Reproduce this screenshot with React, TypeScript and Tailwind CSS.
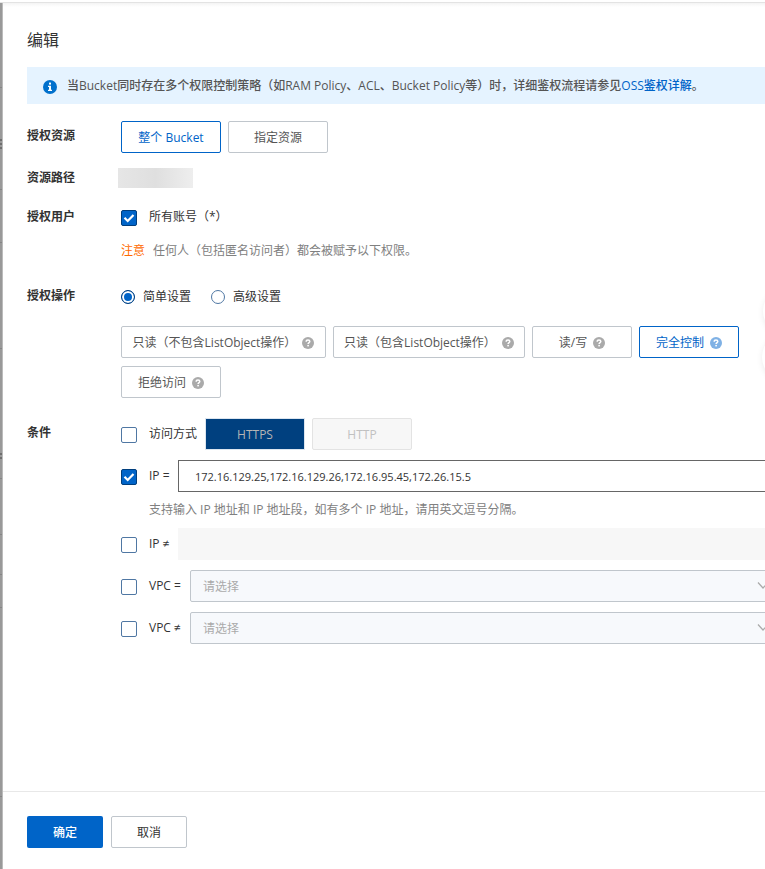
import { useState } from 'react';
import type { ReactNode } from 'react';

type Permission = 'read' | 'list' | 'write' | 'full' | 'deny';

const PERMISSIONS: Array<{ id: Permission; label: string; width: string }> = [
  { id: 'read', label: '只读（不包含ListObject操作）', width: 'w-[205px]' },
  { id: 'list', label: '只读（包含ListObject操作）', width: 'w-48' },
  { id: 'write', label: '读/写', width: 'w-[100px]' },
  { id: 'full', label: '完全控制', width: 'w-[100px]' },
  { id: 'deny', label: '拒绝访问', width: 'w-[100px]' },
];

const BUTTON_BASE = 'flex h-8 items-center justify-center rounded-xs border bg-white pt-0.5 whitespace-nowrap';
const BUTTON_ACTIVE = 'border-[#0064c8] text-[#0064c8]';
const BUTTON_IDLE = 'border-[#c0c6cc] text-[#555]';

function HelpIcon({ active }: { active: boolean }) {
  return (
    <svg viewBox="0 0 12 12" className={`h-3 w-3 shrink-0 ${active ? 'text-[#7fb1e5]' : 'text-[#aaa]'}`} aria-hidden="true">
      <circle cx="6" cy="6" r="6" fill="currentColor" />
      <path d="M4.2 4.7C4.2 3.6 5 3 6 3s1.8.6 1.8 1.5C7.8 5.6 6.1 5.7 6.1 7.1" fill="none" stroke="#fff" strokeWidth="1.5" />
      <rect x="5.3" y="7.9" width="1.6" height="1.5" fill="#fff" />
    </svg>
  );
}

function InfoIcon() {
  return (
    <svg viewBox="0 0 14 14" className="mt-0.5 h-3.5 w-3.5 shrink-0" aria-hidden="true">
      <circle cx="7" cy="7" r="7" fill="#0070cc" />
      <rect x="6" y="2.6" width="2" height="2" fill="#fff" />
      <path d="M5 5.7h3v4h1v1.300H5V9.700h1V7H5z" fill="#fff" />
    </svg>
  );
}

function Checkbox({ id, defaultChecked = false }: { id: string; defaultChecked?: boolean }) {
  return (
    <span className="relative mt-0.5 mr-3 flex h-4 w-4 shrink-0">
      <input
        id={id}
        type="checkbox"
        defaultChecked={defaultChecked}
        className="peer h-4 w-4 appearance-none rounded-xs border border-[#4f77a3] bg-white checked:border-[#003e7d] checked:bg-[#0064c8]"
      />
      <svg viewBox="0 0 16 16" className="pointer-events-none absolute inset-0 hidden peer-checked:block" aria-hidden="true">
        <path d="M3.5 7.8 6.7 11l5.800-6" fill="none" stroke="#fff" strokeWidth="2.2" />
      </svg>
    </span>
  );
}

function Radio({ id, label, defaultChecked = false }: { id: string; label: string; defaultChecked?: boolean }) {
  return (
    <span className="flex items-center gap-2">
      <input
        id={id}
        type="radio"
        name="mode"
        defaultChecked={defaultChecked}
        className="h-3.5 w-3.5 appearance-none rounded-full border border-[#4f77a3] bg-white checked:border-[#003e7d] checked:bg-[#0064c8] checked:shadow-[inset_0_0_0_2px_#fff]"
      />
      <label htmlFor={id}>{label}</label>
    </span>
  );
}

function FormRow({ label, tall = false, children }: { label: string; tall?: boolean; children: ReactNode }) {
  return (
    <div className="flex">
      <h3 className={`w-[94px] shrink-0 font-semibold ${tall ? 'leading-[30px]' : 'leading-5'}`}>{label}</h3>
      <div className="min-w-0 flex-1">{children}</div>
    </div>
  );
}

function VpcSelect({ id, label }: { id: string; label: string }) {
  return (
    <div className="-mr-4 flex h-8 items-center">
      <Checkbox id={`${id}-on`} />
      <label htmlFor={`${id}-on`} className="mr-2 w-[33px] shrink-0 whitespace-nowrap">
        {label}
      </label>
      <div className="relative flex-1">
        <select
          aria-label={label}
          className="h-8 w-full appearance-none rounded-xs border border-[#c0c6cc] bg-[#f7f9fc] px-3 pt-0.5 text-[#aaa]"
        >
          <option>请选择</option>
        </select>
        <svg viewBox="0 0 12 12" className="pointer-events-none absolute top-2.5 right-3 h-3 w-3" aria-hidden="true">
          <path d="M1 2.5 6 8l5-5.500" fill="none" stroke="#aaa" strokeWidth="1.2" />
        </svg>
      </div>
    </div>
  );
}

// sliver of the dimmed page that stays visible beside the drawer
function PageEdge() {
  const lines = [84, 186, 239, 345, 475, 531, 571, 604, 793];

  return (
    <svg className="absolute inset-y-0 left-0 h-full w-[3px]" aria-hidden="true">
      <rect width="2" height="100%" fill="#999" />
      <rect x="2" width="1" height="100%" fill="#bbb" />
      {lines.map((y) => (
        <rect key={y} y={y} width="2" height="1" fill="#858585" />
      ))}
      <path d="M0 137h2M0 141h2M0 145h2M0 451h2M0 455h2" stroke="#444" />
    </svg>
  );
}

export default function App() {
  const [scope, setScope] = useState<'bucket' | 'resource'>('bucket');
  const [permission, setPermission] = useState<Permission>('full');

  return (
    <div className="flex min-h-screen flex-col bg-white pt-0.5 font-['Open_Sans','Noto_Sans_CJK_SC',sans-serif] text-xs text-[#333]">
      <div className="relative flex flex-1 flex-col overflow-hidden border-t border-[#e3e3e3] pl-[3px]">
        <PageEdge />
        <div className="h-1 bg-linear-to-b from-[#f4f4f4] to-white" />

        <main className="flex-1 pl-6">
          <h2 className="mt-[21px] text-base leading-6">编辑</h2>

          <div className="mt-[15px] flex h-[37px] items-center gap-2.5 bg-[#e5f3ff] pl-4 font-medium whitespace-nowrap text-[#555]">
            <InfoIcon />
            <p>
              当Bucket同时存在多个权限控制策略（如RAM Policy、ACL、Bucket Policy等）时，详细鉴权流程请参见
              <a href="#auth" className="text-[#0064c8]">
                OSS鉴权详解
              </a>
              。
            </p>
          </div>

          <form className="mt-[17px] flex flex-col">
            <FormRow label="授权资源" tall>
              <div className="flex gap-[7px]">
                <button
                  type="button"
                  onClick={() => setScope('bucket')}
                  className={`${BUTTON_BASE} w-[100px] ${scope === 'bucket' ? BUTTON_ACTIVE : BUTTON_IDLE}`}
                >
                  整个 Bucket
                </button>
                <button
                  type="button"
                  onClick={() => setScope('resource')}
                  className={`${BUTTON_BASE} w-[100px] ${scope === 'resource' ? BUTTON_ACTIVE : BUTTON_IDLE}`}
                >
                  指定资源
                </button>
              </div>
            </FormRow>

            <div className="mt-[15px]">
              <FormRow label="资源路径">
                <div className="-ml-[3px] h-5 w-[75px] bg-linear-to-r from-[#e6e6e6] via-[#dfdfdf] to-[#eee]" />
              </FormRow>
            </div>

            <div className="mt-[19px]">
              <FormRow label="授权用户">
                <div className="flex h-5 items-center">
                  <Checkbox id="all-accounts" defaultChecked />
                  <label htmlFor="all-accounts">所有账号（*）</label>
                </div>
                <p className="mt-3.5 leading-5 text-[#808080]">
                  <span className="mr-2 text-[#ff6a00]">注意</span>
                  任何人（包括匿名访问者）都会被赋予以下权限。
                </p>
              </FormRow>
            </div>

            <div className="mt-[25px]">
              <FormRow label="授权操作">
                <div className="flex h-[22px] items-center gap-5">
                  <Radio id="mode-simple" label="简单设置" defaultChecked />
                  <Radio id="mode-advanced" label="高级设置" />
                </div>
                <div className="mt-[18px] flex flex-wrap gap-x-[7px] gap-y-2">
                  {PERMISSIONS.map(({ id, label, width }) => {
                    const active = id === permission;

                    return (
                      <button
                        key={id}
                        type="button"
                        onClick={() => setPermission(id)}
                        className={`${BUTTON_BASE} gap-1.5 ${width} ${active ? BUTTON_ACTIVE : BUTTON_IDLE}`}
                      >
                        {label}
                        <HelpIcon active={active} />
                      </button>
                    );
                  })}
                </div>
              </FormRow>
            </div>

            <div className="mt-5">
              <FormRow label="条件" tall>
                <div className="flex flex-col">
                  <div className="flex h-8 items-center">
                    <Checkbox id="protocol" />
                    <label htmlFor="protocol" className="mr-2 w-12">
                      访问方式
                    </label>
                    <div className="flex gap-[7px]">
                      <button type="button" disabled className="h-8 w-[100px] border border-[#dce5ef] bg-[#00407f] pt-0.5 text-[#b5b5b5]">
                        HTTPS
                      </button>
                      <button type="button" disabled className="h-8 w-[100px] rounded-xs border border-[#e3e3e3] bg-[#f7f7f7] pt-0.5 text-[#c1c1c1]">
                        HTTP
                      </button>
                    </div>
                  </div>

                  <div className="mt-2.5 -mr-4 flex h-8 items-center">
                    <Checkbox id="ip-eq" defaultChecked />
                    <label htmlFor="ip-eq" className="mr-2 w-[21px] shrink-0 whitespace-nowrap">
                      IP =
                    </label>
                    <input
                      type="text"
                      aria-label="IP ="
                      defaultValue="172.16.129.25,172.16.129.26,172.16.95.45,172.26.15.5"
                      className="h-8 min-w-0 flex-1 border border-[#666] px-4 text-[11px]"
                    />
                  </div>
                  <p className="mt-2 ml-7 leading-5 text-[#808080]">
                    支持输入 IP 地址和 IP 地址段，如有多个 IP 地址，请用英文逗号分隔。
                  </p>

                  <div className="mt-2 -mr-4 flex h-8 items-center">
                    <Checkbox id="ip-ne" />
                    <label htmlFor="ip-ne" className="mr-2 w-[21px] shrink-0 whitespace-nowrap">
                      IP ≠
                    </label>
                    <input type="text" aria-label="IP ≠" disabled className="h-8 min-w-0 flex-1 bg-[#f7f7f7] px-4" />
                  </div>

                  <div className="mt-2.5 flex flex-col gap-2.5">
                    <VpcSelect id="vpc-eq" label="VPC =" />
                    <VpcSelect id="vpc-ne" label="VPC ≠" />
                  </div>
                </div>
              </FormRow>
            </div>
          </form>
        </main>

        <footer className="flex gap-2 border-t border-[#e8e8e8] pt-6 pb-[21px] pl-6">
          <button type="button" className="h-8 w-[76px] rounded-xs bg-[#0064c8] pt-0.5 font-medium text-white">
            确定
          </button>
          <button type="button" className="h-8 w-[76px] rounded-xs border border-[#c0c6cc] bg-white pt-0.5">
            取消
          </button>
        </footer>

        <div className="absolute top-[284px] -right-[46px] h-12 w-12 rounded-full bg-white shadow-[0_2px_6px_rgba(0,0,0,0.08)]" />
        <div className="absolute top-[330px] -right-[45px] h-12 w-12 rounded-full bg-white shadow-[0_2px_6px_rgba(0,0,0,0.08)]" />
      </div>
    </div>
  );
}
